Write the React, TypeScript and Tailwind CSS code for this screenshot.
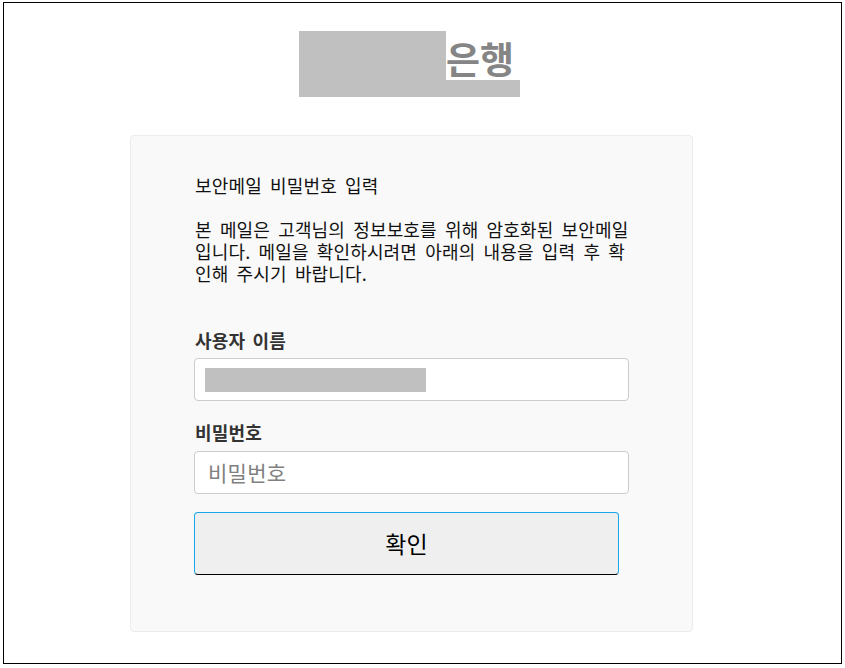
import React from "react";

export default function App() {
  const font = { fontFamily: '"Noto Sans CJK KR", "Noto Sans", sans-serif' } as React.CSSProperties;
  return (
    <div className="bg-white w-[845px] h-[668px] pt-[2px] pl-[3px]" style={font}>
      <div className="w-[839px] h-[662px] border border-black flex flex-col">
        <div className="ml-[295px] mt-[28px] w-[221px] h-[66px] flex">
          <div className="w-[147px] h-[66px] bg-[#c0c0c0]" />
          <div className="w-[74px] h-[66px] flex flex-col">
            <div className="h-[49px] flex items-end">
              <span className="text-[37px] leading-[43px] font-bold text-[#858585]">은행</span>
            </div>
            <div className="h-[17px] bg-[#c0c0c0]" />
          </div>
        </div>
        <div className="ml-[126px] mt-[38px] w-[563px] h-[497px] bg-[#f9f9f9] border border-[#ececec] rounded-[4px] pl-[63px] pt-[37px]">
          <div className="w-[435px]">
            <div className="text-[18px] leading-[24px] text-[#111] pl-[1px] tracking-[0.15px] [word-spacing:4px]">보안메일 비밀번호 입력</div>
            <p className="mt-[21px] text-[18px] leading-[22px] text-[#111] pl-[1px] tracking-[0.15px] [word-spacing:4px]">
              본 메일은 고객님의 정보보호를 위해 암호화된 보안메일 입니다. 메일을 확인하시려면 아래의 내용을 입력 후 확인해 주시기 바랍니다.
            </p>
            <div className="mt-[44px] text-[18px] leading-[24px] font-bold text-[#333] pl-[1px] tracking-[0.2px] [word-spacing:3px]">사용자 이름</div>
            <div className="mt-[6px] h-[43px] bg-white border border-[#cccccc] rounded-[4px] pl-[10px] pt-[9px]">
              <div className="w-[221px] h-[24px] bg-[#c0c0c0]" />
            </div>
            <div className="mt-[19px] text-[18px] leading-[24px] font-bold text-[#333] pl-[1px] tracking-[0.2px]">비밀번호</div>
            <div className="mt-[7px] h-[43px] bg-white border border-[#cccccc] rounded-[4px] pl-[13px] flex items-center">
              <span className="text-[21px] text-[#808080] tracking-[0.3px]">비밀번호</span>
            </div>
            <button className="mt-[18px] w-[425px] h-[63px] bg-[#efefef] border border-[#1aa7e8] border-b-black rounded-[4px] flex items-center justify-center text-[23px] text-black">
              확인
            </button>
          </div>
        </div>
      </div>
    </div>
  );
}
